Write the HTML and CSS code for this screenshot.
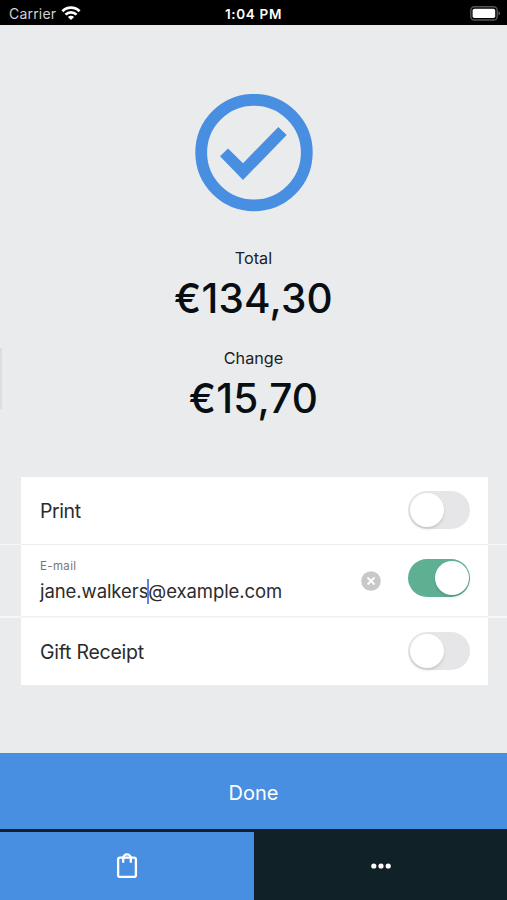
FILE: index.html
```html
<!DOCTYPE html>
<html lang="en">
<head>
<meta charset="utf-8">
<title>Payment complete</title>
<link rel="stylesheet" href="styles.css">
</head>
<body>
<div class="app">
  <header class="status">
    <div class="carrier"><span class="carrier-name">Carrier</span>
      <svg class="wifi" width="20" height="15" viewBox="0 0 20 15" fill="none" stroke="#fff" stroke-width="2.7"><path d="M1.4 5.2a12 12 0 0 1 17.2 0"/><path d="M4.5 8.6a7.7 7.7 0 0 1 11 0"/><path d="M10 14 6.9 11a4.3 4.3 0 0 1 6.2 0Z" fill="#fff" stroke="none"/></svg>
    </div>
    <span class="time">1:04 PM</span>
    <svg class="battery" width="31" height="15" viewBox="0 0 31 15"><rect x=".8" y=".8" width="26.4" height="13.2" rx="3.6" fill="none" stroke="#555" stroke-width="1.4"/><rect x="2.6" y="2.7" width="22.6" height="9.4" rx="1.8" fill="#fff"/><path d="M28.5 5.2q3 2.2 0 4.4Z" fill="#666"/></svg>
  </header>
  <main class="content">
    <i class="edge"></i>
    <svg class="check" width="118" height="118" viewBox="0 0 118 118"><circle cx="59" cy="58.6" r="52.8" fill="none" stroke="#488fe1" stroke-width="11.8"/><path d="M25 62.3 33 54.5 48 69.2 83.3 33 91.7 41 48 86Z" fill="#488fe1"/></svg>
    <div class="label total">Total</div>
    <div class="amount amount-total">€134,30</div>
    <div class="label change">Change</div>
    <div class="amount amount-change">€15,70</div>
    <div class="options">
      <div class="row">
        <div class="cell"><span class="option print">Print</span><span class="switch"></span></div>
      </div>
      <div class="row row-email">
        <div class="cell">
          <div class="field"><span class="hint">E-mail</span><span class="option email">jane.walkers<i class="caret"></i>@example.com</span></div>
          <svg class="clear" width="20" height="20" viewBox="0 0 20 20"><circle cx="10" cy="10" r="9.8" fill="#c8c8c8"/><path d="m6.5 6.5 7 7m0-7-7 7" stroke="#fff" stroke-width="1.9"/></svg>
          <span class="switch on"></span>
        </div>
      </div>
      <div class="row row-gift">
        <div class="cell"><span class="option gift">Gift Receipt</span><span class="switch"></span></div>
      </div>
    </div>
  </main>
  <div class="done"><span>Done</span></div>
  <nav class="tabs">
    <div class="tab active"><svg width="22" height="26" viewBox="0 0 22 26" fill="none" stroke="#fff" stroke-width="2.3"><rect x="2.1" y="4.7" width="17.8" height="19.2" rx="2"/><path d="M7.2 9.7V5.2a3.8 3.8 0 0 1 7.6 0v4.5"/></svg></div>
    <div class="tab"><svg width="20" height="6" viewBox="0 0 20 6" fill="#fff"><circle cx="2.8" cy="3" r="2.6"/><circle cx="10" cy="3" r="2.6"/><circle cx="17.2" cy="3" r="2.6"/></svg></div>
  </nav>
</div>
</body>
</html>
```
FILE: styles.css
```css
* { box-sizing: border-box; }
body { margin: 0; font-family: Inter, "Liberation Sans", sans-serif; background: #e9ebed; }
svg { display: block; flex: none; }
.app { width: 507px; height: 900px; display: flex; flex-direction: column; overflow: hidden; }
.status { height: 25px; flex: none; background: #000; color: #fff; display: grid; grid-template-columns: 1fr auto 1fr; align-items: center; padding: 2px 6px 0 9px; }
.carrier { display: flex; align-items: center; gap: 5px; }
.carrier-name { font-size: 14px; color: #d2d2d2; letter-spacing: .2px; }
.time { font-size: 13.5px; font-weight: 600; letter-spacing: .65px; margin-right: 3px; }
.battery { justify-self: end; }
.content { position: relative; flex: 1; display: flex; flex-direction: column; align-items: center; color: #080e12; }
.edge { position: absolute; left: 0; top: 323px; width: 2px; height: 61px; background: #dcdee0; }
.check { margin-top: 69px; }
.label { font-size: 16.2px; line-height: 20px; color: #1b2023; }
.total { margin-top: 36px; }
.amount { font-size: 40.5px; line-height: 50px; font-weight: 500; letter-spacing: .2px; }
.amount-total { margin-top: 6px; }
.change { margin-top: 24px; }
.amount-change { margin-top: 6px; }
.options { width: 100%; margin-top: 53px; }
.row { height: 67px; padding: 0 19.5px 0 20.5px; }
.row-email { height: 74px; border-top: 1px solid #f6f7f8; border-bottom: 2px solid #f6f7f8; }
.row-email .cell { box-shadow: 0 -1px #ececed, 0 1px #f0f0f1; }
.cell { height: 100%; background: #fff; display: flex; align-items: center; padding: 0 17.5px 0 19.5px; color: #2b2b2d; }
.option { font-size: 19.5px; line-height: 24px; white-space: nowrap; letter-spacing: -.25px; }
.print { letter-spacing: -.4px; }
.field { display: flex; flex-direction: column; padding-top: 2px; }
.hint { font-size: 11.5px; line-height: 14px; letter-spacing: .35px; color: #777; margin-bottom: 6px; }
.email { font-size: 18.5px; letter-spacing: -.07px; }
.caret { display: inline-block; width: 2px; height: 25px; margin: 0 -1px; vertical-align: -6px; background: #5d85f0; }
.switch { width: 62px; height: 38px; border-radius: 19px; background: #e6e6e8; margin-left: auto; padding: 2px; flex: none; }
.switch::before { content: ""; display: block; width: 34px; height: 34px; border-radius: 50%; background: #fff; box-shadow: 0 2px 3px #0002; }
.print + .switch, .gift + .switch { margin-top: -1px; }
.switch.on { background: #5fb093; margin-left: 27.5px; margin-top: -5px; }
.switch.on::before { margin-left: 24.5px; }
.clear { margin-left: auto; }
.done { height: 76px; flex: none; background: #488fe1; color: #fff; display: flex; align-items: center; justify-content: center; font-size: 20px; padding-top: 4px; }
.tabs { height: 71px; flex: none; background: #102127; display: flex; padding-top: 3px; }
.tab { flex: 1; display: flex; align-items: center; justify-content: center; padding-left: 1px; }
.active { background: #488fe1; }
```
